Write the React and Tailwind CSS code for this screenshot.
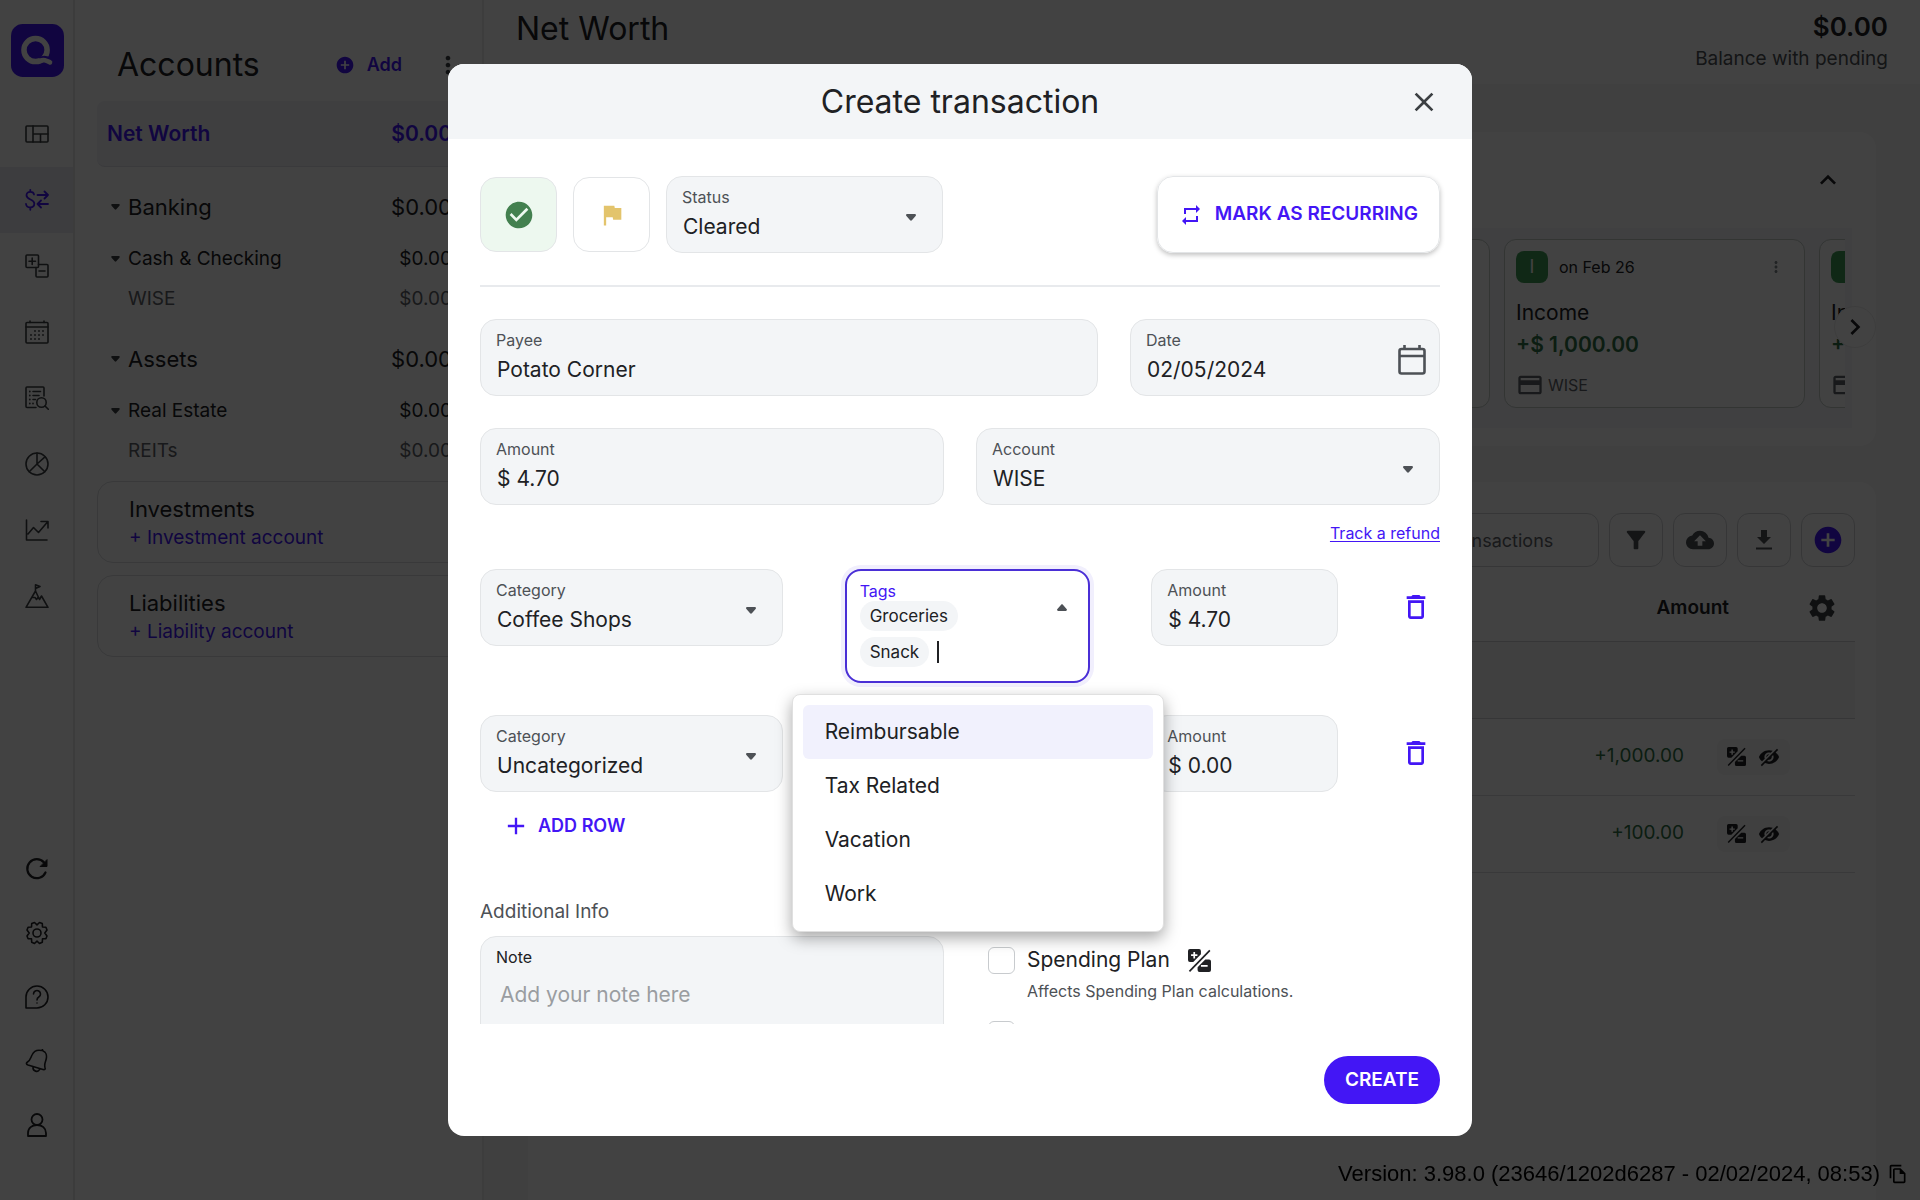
import React, { useState } from 'react';
import {
  MdAdd,
  MdAddCircle,
  MdBackup,
  MdCheckCircle,
  MdChevronRight,
  MdClose,
  MdCreditCard,
  MdDeleteOutline,
  MdExpandLess,
  MdFilterAlt,
  MdFlag,
  MdMoreVert,
  MdOutlineFileCopy,
  MdRepeat,
  MdSettings,
  MdVisibilityOff
} from 'react-icons/md';

const stroke = {
  viewBox: '0 0 24 24',
  fill: 'none',
  stroke: 'currentColor',
  strokeWidth: 1.6,
  strokeLinecap: 'round',
  strokeLinejoin: 'round',
  className: 'size-6',
  'aria-hidden': true
};

const Logo = () => (
  <svg viewBox="0 0 54 54" className="size-[53px]" aria-hidden="true">
    <rect width="54" height="54" rx="12" fill="#4316f5" />
    <circle cx="25" cy="26.5" r="11.8" fill="none" stroke="#fff" strokeWidth="5.6" />
    <path d="M29 35.2c3.500-2.200 8-1.700 13 1" fill="none" stroke="#4316f5" strokeWidth="3" />
    <path d="M25 38.300c4.500 0 5.500-2.300 9.500-1.400 1.800.4 3.200 1.200 5.200 2.200" fill="none" stroke="#fff" strokeWidth="4.800" strokeLinecap="round" />
  </svg>
);

const DashboardIcon = () => (
  <svg {...stroke}>
    <rect x="1" y="4" width="22" height="16" rx="1" />
    <path d="M8 4v16M8 12h15M15.500 12v8" />
  </svg>
);

const TransactionsIcon = () => (
  <svg {...stroke} strokeWidth={1.8}>
    <path d="M9 6.500C8.800 4.800 7.300 3.800 5.300 3.800 3.200 3.800 1.500 5 1.500 7.300c0 5 7.800 3.400 7.800 8.300 0 2.400-1.800 3.900-4 3.900-2.500 0-4-1.300-4.300-3.500M5.300 1.800v2M5.300 19.500v2.300" />
    <path d="M12.500 7H23M19.500 3.500 23 7l-3.500 3.500M23 16H12.500M16 12.500 12.500 16l3.500 3.500" />
  </svg>
);

const SpendingIcon = () => (
  <svg {...stroke}>
    <rect x="1" y="1" width="12.500" height="12.500" rx="1" />
    <path d="M7.200 4v6.500M4 7.200h6.500M13.500 10.500H22a1 1 0 0 1 1 1V22a1 1 0 0 1-1 1H12a1 1 0 0 1-1-1v-8.500M14 17h6" />
  </svg>
);

const BillsIcon = () => (
  <svg {...stroke}>
    <rect x="1" y="2.500" width="22" height="20.500" rx="1" />
    <path d="M1 7h22M5 1v1.500M19 1v1.500" />
    <path strokeWidth="1.800" d="M10 11h.01M14 11h.01M18 11h.01M6 15h.01M10 15h.01M14 15h.01M18 15h.01M6 19h.01M10 19h.01M14 19h.01" />
  </svg>
);

const ReportsIcon = () => (
  <svg {...stroke}>
    <path d="M11 21.500H2a1 1 0 0 1-1-1V2a1 1 0 0 1 1-1h16a1 1 0 0 1 1 1v8M8 5.500h7.500M8 9.500h6M8 13.500h2.500" />
    <path strokeWidth="1.800" d="M4.800 5.500h.01M4.800 9.500h.01M4.800 13.500h.01M4.800 17.500h.01M8 17.500h.01" />
    <circle cx="16.500" cy="16.500" r="4.700" />
    <path d="m20 20 3.300 3.300" />
  </svg>
);

const ChartIcon = () => (
  <svg {...stroke}>
    <circle cx="12" cy="12" r="11" />
    <path d="M12 1v11L20 4.800M12 12l-7.800 7.800M12 12l7.800 7.800" />
  </svg>
);

const InvestIcon = () => (
  <svg {...stroke}>
    <path d="M1.500 2v20H22M3 16l5.500-6.500 5 5L22.500 4M16 3.500h7V10" />
  </svg>
);

const GoalsIcon = () => (
  <svg {...stroke}>
    <path d="M10.500 7 1 23.300h22L16.500 12l-2 3.500L10.500 7V.800L15 2.500 10.500 4.500M7 13.500h3l1.500 2 1.500-2" />
  </svg>
);

const RefreshIcon = () => (
  <svg {...stroke} strokeWidth={2.2}>
    <path d="M20.500 15.500A9.500 9.500 0 1 1 19 5.500" />
    <path fill="currentColor" strokeWidth="1" d="M22 3v6.500h-6.500z" />
  </svg>
);

const GearIcon = () => (
  <svg {...stroke}>
    <circle cx="12" cy="12" r="4" />
    <path d="M9.500 1.500 12 3.800l2.500-2.300 2.800 1.100.2 3.400 3.400.2 1.100 2.800L19.800 12l2.200 3-1.100 2.700-3.400.1-.2 3.500-2.800 1.200-2.500-2.300-2.500 2.300-2.800-1.200-.2-3.500-3.400-.1L2 15l2.200-3L2 9l1.100-2.800 3.400-.2.200-3.400z" />
  </svg>
);

const HelpIcon = () => (
  <svg {...stroke}>
    <path d="M1 23V12A11 11 0 1 1 12 23zM8.500 9a3.500 3.500 0 1 1 5.300 3c-1.300.8-1.800 1.400-1.800 3M12 18h.01" />
  </svg>
);

const BellIcon = () => (
  <svg {...stroke}>
    <path d="M16.500 1.500l1-.8.500 1.300c3 1 4 4.500 3.200 8-.8 3.600-2.200 5-1.200 8.500.5 1.500 0 2.500-2 2L3 16c-2-.7-2-2-.5-3C5.500 11 5.500 9 7 6c1.500-3.200 5-5.500 9.500-4.500zM8 18.500c-.3 3.500 5 5.500 6.500 2" />
  </svg>
);

const UserIcon = () => (
  <svg {...stroke} strokeWidth={1.8}>
    <circle cx="12" cy="6.500" r="5.500" />
    <path d="M3 23v-3c0-5 4-8 9-8s9 3 9 8v3z" />
  </svg>
);

const CaretIcon = ({ className = 'h-[7px] w-[10px]' }) => (
  <svg viewBox="0 0 10 7" aria-hidden="true" className={className}>
    <path fill="currentColor" d="M1.200 0h7.600c1 0 1.500 1.200.8 1.900L5.900 6.200c-.5.600-1.300.600-1.800 0L.4 1.900C-.3 1.200.2 0 1.200 0z" />
  </svg>
);

const NoPlanIcon = ({ className = 'size-5' }) => (
  <svg viewBox="0 0 24 24" aria-hidden="true" className={className}>
    <path fill="currentColor" d="M2 0h9.500a2 2 0 0 1 2 2v3.500l-8 8H2a2 2 0 0 1-2-2V2a2 2 0 0 1 2-2zM18 11h4a2 2 0 0 1 2 2v9a2 2 0 0 1-2 2H12a2 2 0 0 1-2-2v-3z" />
    <path stroke="#fff" strokeWidth="1.800" d="M6.500 3.200v6.600M3.200 6.500h6.600M13.500 17.500h7" />
    <path stroke="currentColor" strokeWidth="1.800" d="M1.500 23.300 22.800 1.500" />
  </svg>
);

const CalendarIcon = () => (
  <svg viewBox="0 0 28 30" fill="none" stroke="currentColor" strokeWidth="2.600" aria-hidden="true" className="h-[30px] w-7">
    <rect x="1.500" y="4" width="25" height="24.500" rx="2" />
    <path d="M1.500 11h25M6.500 0v4M21.500 0v4" />
  </svg>
);

const DownloadIcon = () => (
  <svg viewBox="0 0 16 20" fill="currentColor" aria-hidden="true" className="h-5 w-4">
    <path d="M5 0h6v7h4l-7 7-7-7h4zM0 17.500h16v2H0z" />
  </svg>
);

const navItems = [
  { name: 'Dashboard', Icon: DashboardIcon },
  { name: 'Transactions', Icon: TransactionsIcon, active: true },
  { name: 'Spending Plan', Icon: SpendingIcon },
  { name: 'Bills', Icon: BillsIcon },
  { name: 'Reports', Icon: ReportsIcon },
  { name: 'Breakdown', Icon: ChartIcon },
  { name: 'Investments', Icon: InvestIcon },
  { name: 'Goals', Icon: GoalsIcon }
];

const toolItems = [
  { name: 'Refresh', Icon: RefreshIcon },
  { name: 'Settings', Icon: GearIcon },
  { name: 'Help', Icon: HelpIcon },
  { name: 'Notifications', Icon: BellIcon },
  { name: 'Profile', Icon: UserIcon }
];

const accountGroups = [
  { title: 'Banking', type: 'Cash & Checking', account: 'WISE' },
  { title: 'Assets', type: 'Real Estate', account: 'REITs' }
];

const emptyGroups = [
  { title: 'Investments', link: '+ Investment account' },
  { title: 'Liabilities', link: '+ Liability account' }
];

const reminders = ['on Jan 26', 'on Feb 5', 'on Feb 12', 'on Feb 26', 'on Mar 26'];

const transactions = [
  { id: 1, amount: '+1,000.00' },
  { id: 2, amount: '+100.00' }
];

const tagOptions = ['Reimbursable', 'Tax Related', 'Vacation', 'Work'];

const NavRail = () => (
  <nav className="flex w-[75px] shrink-0 flex-col border-r-2 border-[#e6e6e6] pt-6 pb-[43px]">
    <a href="#home" aria-label="Home" className="mb-6 ml-[11px]">
      <Logo />
    </a>
    {navItems.map(({ name, Icon, active }) => (
      <a
        key={name}
        href="#nav"
        aria-label={name}
        className={`flex h-[66px] items-center justify-center ${active ? 'bg-[#ebebf3] text-[#4316f5]' : 'text-[#3c4043]'}`}
      >
        <Icon />
      </a>
    ))}
    <div className="mt-auto">
      {toolItems.map(({ name, Icon }) => (
        <button key={name} type="button" aria-label={name} className="flex h-16 w-full items-center justify-center text-[#202124]">
          <Icon />
        </button>
      ))}
    </div>
  </nav>
);

const AccountsPanel = () => (
  <aside className="w-[409px] shrink-0 border-r-2 border-[#ececec] pr-3 pl-[22px]">
    <div className="flex h-[101px] items-center pt-7 pl-5">
      <h2 className="text-[32px]">Accounts</h2>
      <button type="button" className="ml-auto flex items-center gap-3 text-lg font-semibold text-[#4316f5]">
        <MdAddCircle className="size-5" />
        Add
      </button>
      <button type="button" aria-label="More options" className="mr-2 ml-8 text-[#3c4043]">
        <MdMoreVert className="size-7" />
      </button>
    </div>

    <div className="flex h-[66px] items-center justify-between rounded-lg border-b border-[#dedee6] bg-[#f1f1f8] pr-[18px] pl-[10px] text-[21px] font-semibold text-[#4316f5]">
      <span>Net Worth</span>
      <span>$0.00</span>
    </div>

    {accountGroups.map((group) => (
      <div key={group.title} className="mt-5 pr-[18px] pl-[14px]">
        <div className="flex h-10 items-center text-[22px]">
          <CaretIcon className="mr-2 h-[6px] w-[9px] text-[#3c4043]" />
          <span>{group.title}</span>
          <span className="ml-auto">$0.00</span>
        </div>
        <div className="mt-3 flex h-10 items-center text-[19px]">
          <CaretIcon className="mr-2 h-[6px] w-[9px] text-[#3c4043]" />
          <span>{group.type}</span>
          <span className="ml-auto">$0.00</span>
        </div>
        <div className="flex h-10 items-center justify-between pl-[17px] text-[19px] text-[#5f6368]">
          <span>{group.account}</span>
          <span>$0.00</span>
        </div>
      </div>
    ))}

    <div className="mt-[10px] flex flex-col gap-3">
      {emptyGroups.map((group) => (
        <div key={group.title} className="h-[82px] rounded-2xl border border-[#dadce0] pt-3 pl-[31px]">
          <div className="text-[22px] leading-[30px]">{group.title}</div>
          <a href="#add" className="text-[19px] leading-7 text-[#4316f5]">
            {group.link}
          </a>
        </div>
      ))}
    </div>
  </aside>
);

const ReminderCard = ({ date }) => (
  <div className="h-[169px] w-[301px] shrink-0 rounded-xl border border-[#c3cbc6] bg-white px-[11px] pt-[11px]">
    <div className="flex items-center">
      <span className="flex size-8 items-center justify-center rounded-lg bg-[#3f9c55] text-lg text-white">I</span>
      <span className="ml-[11px] text-base">{date}</span>
      <button type="button" aria-label="Reminder options" className="mr-2 ml-auto text-[#80868b]">
        <MdMoreVert className="size-[18px]" />
      </button>
    </div>
    <div className="mt-[14px] text-[21px] leading-8">Income</div>
    <div className="text-[21px] leading-8 font-semibold text-[#2f7045]">+$ 1,000.00</div>
    <div className="mt-[10px] flex items-center gap-1 text-base leading-7 text-[#5f6368]">
      <MdCreditCard className="size-7" />
      WISE
    </div>
  </div>
);

const UpcomingCard = () => (
  <section className="h-[314px] rounded-2xl bg-white pt-8 pr-6 pl-6">
    <div className="flex justify-end pr-2">
      <button type="button" aria-label="Collapse" className="text-[#202124]">
        <MdExpandLess className="size-8" />
      </button>
    </div>
    <div className="relative mt-8 bg-[#f5f5fa] px-[7px] pt-[11px] pb-5">
      <div className="flex gap-[14px] overflow-hidden">
        {reminders.map((date) => (
          <ReminderCard key={date} date={date} />
        ))}
      </div>
      <button
        type="button"
        aria-label="Next"
        className="absolute top-[78px] -right-6 flex size-[42px] items-center justify-center rounded-full border border-[#ebebeb] bg-white text-[#202124]"
      >
        <MdChevronRight className="size-8" />
      </button>
    </div>
  </section>
);

const toolButton = 'flex size-[54px] shrink-0 items-center justify-center rounded-xl border border-[#d0d2d5] text-[#4d5156]';

const Register = () => (
  <section className="mt-9 flex-1 rounded-t-2xl bg-white px-[21px] pt-[31px]">
    <div className="flex justify-end gap-[10px]">
      <input
        type="text"
        aria-label="Search transactions"
        placeholder="Search transactions"
        className="h-[54px] w-[272px] rounded-xl border border-[#d0d2d5] pl-14 text-lg placeholder:text-[#5f6368]"
      />
      <button type="button" aria-label="Filter" className={toolButton}>
        <MdFilterAlt className="size-7" />
      </button>
      <button type="button" aria-label="Import" className={toolButton}>
        <MdBackup className="size-7" />
      </button>
      <button type="button" aria-label="Export" className={toolButton}>
        <DownloadIcon />
      </button>
      <button type="button" aria-label="Add transaction" className={toolButton}>
        <MdAddCircle className="size-8 text-[#4316f5]" />
      </button>
    </div>
    <table className="mt-2 w-full table-fixed">
      <colgroup>
        <col />
        <col className="w-[62px]" />
        <col className="w-[109px]" />
      </colgroup>
      <thead>
        <tr className="h-[66px] border-b border-[#d0d2d5] text-[19px]">
          <th className="pr-[17px] text-right font-semibold" colSpan={2}>
            Amount
          </th>
          <th className="pl-[60px]">
            <button type="button" aria-label="Table settings" className="block text-[#3c4043]">
              <MdSettings className="size-8" />
            </button>
          </th>
        </tr>
      </thead>
      <tbody>
        <tr className="h-[77px] border-b border-[#d0d2d5] bg-[#f5f5f5]">
          <td colSpan={3}></td>
        </tr>
        {transactions.map((item) => (
          <tr key={item.id} className="h-[77px] border-b border-[#dadce0] text-[19px]">
            <td className="text-right text-[#2f7045]">{item.amount}</td>
            <td className="pl-[33px]" colSpan={2}>
              <span className="inline-flex h-9 items-center gap-3 rounded-lg bg-[#f5f5f5] px-[10px] align-middle">
                <NoPlanIcon className="size-[19px]" />
                <MdVisibilityOff className="size-[22px] -scale-x-100" />
              </span>
            </td>
          </tr>
        ))}
      </tbody>
    </table>
  </section>
);

const fieldBox = 'relative h-[77px] rounded-2xl border border-[#e3e5e7] bg-[#f3f5f7] pt-[10px]';
const fieldLabel = 'block pl-[15px] text-base leading-5 text-[#4d5156]';
const fieldValue = 'mt-1 block w-full appearance-none bg-transparent pl-4 text-[21px] leading-8 text-[#202124] outline-none';

const TextField = ({ id, label, value, className = '', children }) => (
  <div className={`${fieldBox} ${className}`}>
    <label htmlFor={id} className={fieldLabel}>
      {label}
    </label>
    <input id={id} type="text" defaultValue={value} className={fieldValue} />
    {children}
  </div>
);

const SelectField = ({ id, label, value, className = '' }) => (
  <div className={`${fieldBox} ${className}`}>
    <label htmlFor={id} className={fieldLabel}>
      {label}
    </label>
    <select id={id} defaultValue={value} className={fieldValue}>
      <option>{value}</option>
    </select>
    <CaretIcon className="pointer-events-none absolute top-[37px] right-[26px] h-[7px] w-[10px] text-[#4d5156]" />
  </div>
);

const TagsField = () => {
  const [tags, setTags] = useState(['Groceries', 'Snack']);

  return (
    <div className="relative w-[245px] shrink-0">
      <div className="relative h-[114px] rounded-2xl border-2 border-[#4a2fd6] bg-white pt-[10px] pl-[13px] ring-4 ring-[#f1effd]">
        <label htmlFor="tags" className="block text-base leading-5 text-[#4316f5]">
          Tags
        </label>
        <div className="flex w-36 flex-wrap items-center gap-x-2 gap-y-[6px]">
          {tags.map((tag) => (
            <span key={tag} className="rounded-full bg-[#f3f5f7] px-[10px] text-[17px] leading-[30px]">
              {tag}
            </span>
          ))}
          <input id="tags" type="text" autoComplete="off" className="h-[22px] w-8 border-l-2 border-[#202124] outline-none" />
        </div>
        <CaretIcon className="absolute top-[33px] right-[21px] h-[7px] w-[10px] rotate-180 text-[#4d5156]" />
      </div>
      <div
        role="listbox"
        aria-label="Tags"
        className="absolute top-[125px] -left-[53px] z-10 w-[372px] rounded-lg border border-[#e0e0e0] bg-white p-[10px] shadow-[0_6px_16px_rgba(0,0,0,0.35)]"
      >
        {tagOptions.map((tag, index) => (
          <button
            key={tag}
            type="button"
            role="option"
            aria-selected={index === 0}
            onClick={() => setTags((prev) => [...prev, tag])}
            className={`block w-full rounded-md pl-[22px] text-left text-[21px] leading-[54px] ${index === 0 ? 'bg-[#f1f1fd]' : ''}`}
          >
            {tag}
          </button>
        ))}
      </div>
    </div>
  );
};

const DeleteButton = () => (
  <button type="button" aria-label="Delete row" className="mt-[22px] text-[#4316f5]">
    <MdDeleteOutline className="size-8" />
  </button>
);

const TransactionModal = () => (
  <div className="fixed inset-0 flex items-center justify-center bg-black/74 p-16">
    <div
      role="dialog"
      aria-labelledby="dialog-title"
      className="flex h-full w-full max-w-5xl flex-col overflow-hidden rounded-2xl bg-white"
    >
      <header className="relative flex h-[75px] shrink-0 items-center justify-center bg-[#f3f5f7]">
        <h1 id="dialog-title" className="text-[32px]">
          Create transaction
        </h1>
        <button type="button" aria-label="Close" className="absolute right-8 text-[#3c4043]">
          <MdClose className="size-8" />
        </button>
      </header>

      <form className="min-h-0 flex-1 overflow-y-auto px-8 pt-[37px] [scrollbar-width:none]">
        <div className="flex items-center gap-4">
          <button
            type="button"
            aria-label="Reviewed"
            className="flex h-[75px] w-[77px] items-center justify-center rounded-2xl border border-[#e3e5e7] bg-[#edf8ef] text-[#43804f]"
          >
            <MdCheckCircle className="size-8" />
          </button>
          <button
            type="button"
            aria-label="Flag"
            className="flex h-[75px] w-[77px] items-center justify-center rounded-2xl border border-[#e3e5e7] text-[#e3c46c]"
          >
            <MdFlag className="size-7" />
          </button>
          <SelectField id="status" label="Status" value="Cleared" className="w-[277px]" />
          <button
            type="button"
            className="ml-auto flex h-[77px] items-center gap-3 rounded-2xl border border-[#e3e5e7] px-[21px] text-[19px] font-semibold text-[#4316f5] shadow-[0_2px_5px_rgba(0,0,0,0.25)]"
          >
            <MdRepeat className="size-6" />
            MARK AS RECURRING
          </button>
        </div>

        <hr className="my-8 border-t-2 border-[#e8eaed]" />

        <div className="flex gap-8">
          <TextField id="payee" label="Payee" value="Potato Corner" className="flex-2" />
          <TextField id="date" label="Date" value="02/05/2024" className="flex-1">
            <button type="button" aria-label="Open calendar" className="absolute top-[25px] right-[13px] text-[#4d5156]">
              <CalendarIcon />
            </button>
          </TextField>
        </div>

        <div className="mt-8 grid grid-cols-2 gap-8">
          <TextField id="amount" label="Amount" value="$ 4.70" />
          <SelectField id="account" label="Account" value="WISE" />
        </div>

        <div className="flex h-16 items-center justify-end pb-2">
          <a href="#refund" className="text-base text-[#4316f5] underline underline-offset-2">
            Track a refund
          </a>
        </div>

        <div className="flex items-start justify-between pr-2">
          <SelectField id="category-1" label="Category" value="Coffee Shops" className="w-[303px]" />
          <TagsField />
          <TextField id="amount-1" label="Amount" value="$ 4.70" className="w-[187px]" />
          <DeleteButton />
        </div>
        <div className="mt-8 flex items-start justify-between pr-2">
          <SelectField id="category-2" label="Category" value="Uncategorized" className="w-[303px]" />
          <select aria-label="Tags" className="h-[77px] w-[245px] appearance-none rounded-2xl border border-[#e3e5e7] bg-[#f3f5f7]" />
          <TextField id="amount-2" label="Amount" value="$ 0.00" className="w-[187px]" />
          <DeleteButton />
        </div>

        <button type="button" className="mt-5 ml-[22px] flex items-center gap-2 text-lg font-semibold text-[#4316f5]">
          <MdAdd className="size-7" />
          ADD ROW
        </button>

        <h2 className="mt-[58px] text-[19px] leading-7 text-[#4d5156]">Additional Info</h2>
        <div className="mt-[10px] grid grid-cols-2 gap-8">
          <div className="h-[140px] rounded-2xl border border-[#e3e5e7] bg-[#f3f5f7] pt-[10px]">
            <label htmlFor="note" className="block pl-[15px] text-base leading-5">
              Note
            </label>
            <textarea
              id="note"
              placeholder="Add your note here"
              className="mt-[10px] block h-20 w-full resize-none bg-transparent px-[19px] text-[21px] leading-9 outline-none placeholder:text-[#9a9da1]"
            />
          </div>
          <div className="pt-[9px] pl-3">
            <div className="flex items-center">
              <input id="plan" type="checkbox" className="size-[27px] appearance-none rounded-md border border-[#c8cbce] bg-white" />
              <label htmlFor="plan" className="ml-3 text-[21px] leading-[30px]">
                Spending Plan
              </label>
              <NoPlanIcon className="ml-[18px] size-[23px]" />
            </div>
            <p className="mt-1 ml-[39px] text-base leading-6 text-[#4d5156]">Affects Spending Plan calculations.</p>
            <input
              type="checkbox"
              aria-label="Reports"
              className="mt-[18px] block size-[27px] appearance-none rounded-md border border-[#c8cbce] bg-white"
            />
          </div>
        </div>
      </form>

      <footer className="flex shrink-0 justify-end p-8">
        <button type="submit" className="h-12 rounded-full bg-[#4316f5] px-[21px] text-[19px] font-semibold text-white">
          CREATE
        </button>
      </footer>
    </div>
  </div>
);

const App = () => {
  return (
    <div className="flex h-screen overflow-hidden bg-white font-['Inter','Roboto',sans-serif] text-[#202124]">
      <NavRail />
      <AccountsPanel />
      <main className="flex min-w-0 flex-1 flex-col bg-[#f5f5f5]">
        <header className="flex h-[84px] shrink-0 justify-between bg-white pt-[9px] pr-8 pl-8">
          <h1 className="text-[32px] leading-10">Net Worth</h1>
          <div className="text-right">
            <div className="text-[26px] leading-9 font-semibold">$0.00</div>
            <div className="text-[19px] leading-7 text-[#4d5156]">Balance with pending</div>
          </div>
        </header>
        <div className="flex flex-1 flex-col pt-12 pr-11 pl-11">
          <UpcomingCard />
          <Register />
        </div>
      </main>

      <TransactionModal />

      <div className="fixed right-3 bottom-3 flex items-center gap-2 font-['Liberation_Sans',Arial,sans-serif] text-[22px] leading-7 text-black">
        Version: 3.98.0 (23646/1202d6287 - 02/02/2024, 08:53)
        <button type="button" aria-label="Copy version">
          <MdOutlineFileCopy className="size-5" />
        </button>
      </div>
    </div>
  );
};

export default App;
